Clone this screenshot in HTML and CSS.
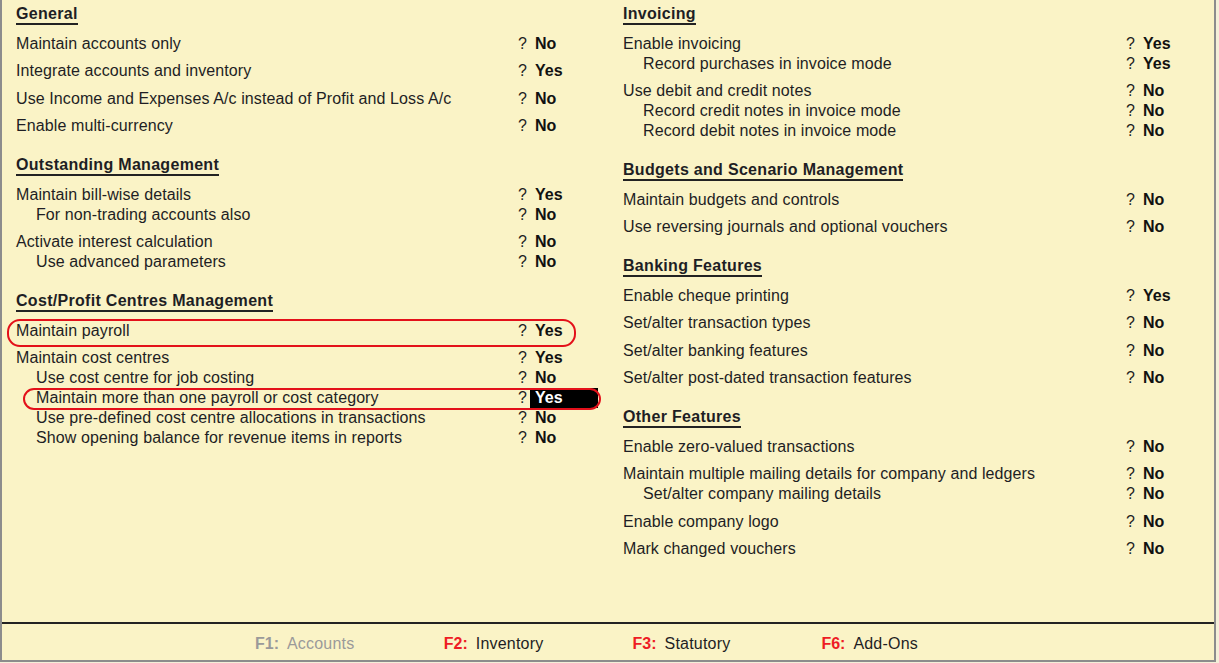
FILE: index.html
```html
<!DOCTYPE html>
<html>
<head>
<meta charset="utf-8">
<title>Features</title>
<link rel="stylesheet" href="styles.css">
</head>
<body>
<div class="window">
  <div class="main">
    <div class="col">
      <div class="section">
        <div class="sec-title"><span>General</span></div>
        <div class="group"><div class="row"><span class="lbl">Maintain accounts only</span><span class="ans"><span class="q">?</span><span class="v">No</span></span></div></div>
        <div class="group"><div class="row"><span class="lbl">Integrate accounts and inventory</span><span class="ans"><span class="q">?</span><span class="v">Yes</span></span></div></div>
        <div class="group"><div class="row"><span class="lbl">Use Income and Expenses A/c instead of Profit and Loss A/c</span><span class="ans"><span class="q">?</span><span class="v">No</span></span></div></div>
        <div class="group"><div class="row"><span class="lbl">Enable multi-currency</span><span class="ans"><span class="q">?</span><span class="v">No</span></span></div></div>
      </div>
      <div class="section">
        <div class="sec-title"><span>Outstanding Management</span></div>
        <div class="group">
          <div class="row"><span class="lbl">Maintain bill-wise details</span><span class="ans"><span class="q">?</span><span class="v">Yes</span></span></div>
          <div class="row sub"><span class="lbl">For non-trading accounts also</span><span class="ans"><span class="q">?</span><span class="v">No</span></span></div>
        </div>
        <div class="group">
          <div class="row"><span class="lbl">Activate interest calculation</span><span class="ans"><span class="q">?</span><span class="v">No</span></span></div>
          <div class="row sub"><span class="lbl">Use advanced parameters</span><span class="ans"><span class="q">?</span><span class="v">No</span></span></div>
        </div>
      </div>
      <div class="section">
        <div class="sec-title"><span>Cost/Profit Centres Management</span></div>
        <div class="group"><div class="row"><span class="lbl">Maintain payroll</span><span class="ans"><span class="q">?</span><span class="v">Yes</span></span><span class="mark mark-payroll"></span></div></div>
        <div class="group">
          <div class="row"><span class="lbl">Maintain cost centres</span><span class="ans"><span class="q">?</span><span class="v">Yes</span></span></div>
          <div class="row sub"><span class="lbl">Use cost centre for job costing</span><span class="ans"><span class="q">?</span><span class="v">No</span></span></div>
          <div class="row sub"><span class="lbl">Maintain more than one payroll or cost category</span><span class="ans"><span class="q">?</span><span class="v sel">Yes</span></span><span class="mark mark-multi"></span></div>
          <div class="row sub"><span class="lbl">Use pre-defined cost centre allocations in transactions</span><span class="ans"><span class="q">?</span><span class="v">No</span></span></div>
          <div class="row sub"><span class="lbl">Show opening balance for revenue items in reports</span><span class="ans"><span class="q">?</span><span class="v">No</span></span></div>
        </div>
      </div>
    </div>
    <div class="col">
      <div class="section">
        <div class="sec-title"><span>Invoicing</span></div>
        <div class="group">
          <div class="row"><span class="lbl">Enable invoicing</span><span class="ans"><span class="q">?</span><span class="v">Yes</span></span></div>
          <div class="row sub"><span class="lbl">Record purchases in invoice mode</span><span class="ans"><span class="q">?</span><span class="v">Yes</span></span></div>
        </div>
        <div class="group">
          <div class="row"><span class="lbl">Use debit and credit notes</span><span class="ans"><span class="q">?</span><span class="v">No</span></span></div>
          <div class="row sub"><span class="lbl">Record credit notes in invoice mode</span><span class="ans"><span class="q">?</span><span class="v">No</span></span></div>
          <div class="row sub"><span class="lbl">Record debit notes in invoice mode</span><span class="ans"><span class="q">?</span><span class="v">No</span></span></div>
        </div>
      </div>
      <div class="section">
        <div class="sec-title"><span>Budgets and Scenario Management</span></div>
        <div class="group"><div class="row"><span class="lbl">Maintain budgets and controls</span><span class="ans"><span class="q">?</span><span class="v">No</span></span></div></div>
        <div class="group"><div class="row"><span class="lbl">Use reversing journals and optional vouchers</span><span class="ans"><span class="q">?</span><span class="v">No</span></span></div></div>
      </div>
      <div class="section">
        <div class="sec-title"><span>Banking Features</span></div>
        <div class="group"><div class="row"><span class="lbl">Enable cheque printing</span><span class="ans"><span class="q">?</span><span class="v">Yes</span></span></div></div>
        <div class="group"><div class="row"><span class="lbl">Set/alter transaction types</span><span class="ans"><span class="q">?</span><span class="v">No</span></span></div></div>
        <div class="group"><div class="row"><span class="lbl">Set/alter banking features</span><span class="ans"><span class="q">?</span><span class="v">No</span></span></div></div>
        <div class="group"><div class="row"><span class="lbl">Set/alter post-dated transaction features</span><span class="ans"><span class="q">?</span><span class="v">No</span></span></div></div>
      </div>
      <div class="section">
        <div class="sec-title"><span>Other Features</span></div>
        <div class="group"><div class="row"><span class="lbl">Enable zero-valued transactions</span><span class="ans"><span class="q">?</span><span class="v">No</span></span></div></div>
        <div class="group">
          <div class="row"><span class="lbl">Maintain multiple mailing details for company and ledgers</span><span class="ans"><span class="q">?</span><span class="v">No</span></span></div>
          <div class="row sub"><span class="lbl">Set/alter company mailing details</span><span class="ans"><span class="q">?</span><span class="v">No</span></span></div>
        </div>
        <div class="group"><div class="row"><span class="lbl">Enable company logo</span><span class="ans"><span class="q">?</span><span class="v">No</span></span></div></div>
        <div class="group"><div class="row"><span class="lbl">Mark changed vouchers</span><span class="ans"><span class="q">?</span><span class="v">No</span></span></div></div>
      </div>
    </div>
  </div>
  <div class="footer">
    <div class="fitem disabled"><span class="key">F1:</span><span class="flbl">Accounts</span></div>
    <div class="fitem"><span class="key">F2:</span><span class="flbl">Inventory</span></div>
    <div class="fitem"><span class="key">F3:</span><span class="flbl">Statutory</span></div>
    <div class="fitem"><span class="key">F6:</span><span class="flbl">Add-Ons</span></div>
  </div>
</div>
</body>
</html>
```

FILE: styles.css
```css
html, body {
  margin: 0;
  padding: 0;
}
body {
  background: #f4efd8;
  font-family: "Liberation Sans", Arial, sans-serif;
  font-size: 16px;
  color: #1e1e24;
}
.window {
  box-sizing: border-box;
  width: 1216px;
  height: 662px;
  border-style: solid;
  border-color: #8c8c8c;
  border-width: 0 2px 2px 2px;
  background: #faf3c6;
  display: flex;
  flex-direction: column;
}
.main {
  flex: 1;
  display: grid;
  grid-template-columns: 584px 585px;
  column-gap: 23px;
  padding: 5px 0 0 14px;
}
.section + .section {
  margin-top: 20px;
}
.sec-title {
  height: 20px;
  margin-bottom: 8.5px;
}
.sec-title span {
  display: inline-block;
  font-weight: bold;
  letter-spacing: 0.3px;
  line-height: 18px;
  border-bottom: 2px solid #222;
}
.group + .group {
  margin-top: 7.5px;
}
.row {
  position: relative;
  display: flex;
  line-height: 20px;
  height: 20px;
  white-space: nowrap;
}
.row.sub {
  padding-left: 20px;
}
.lbl {
  flex: 1;
  letter-spacing: 0.1px;
}
.ans {
  width: 82px;
  display: flex;
}
.q {
  width: 12px;
}
.v {
  box-sizing: border-box;
  width: 68px;
  padding-left: 5px;
  font-weight: bold;
  color: #111;
}
.v.sel {
  background: #000;
  color: #fff;
}
.mark {
  position: absolute;
  border: 2px solid #e3101a;
  pointer-events: none;
}
.mark-payroll {
  left: -9px;
  right: 24px;
  top: -2px;
  bottom: -6px;
  border-radius: 13px;
}
.mark-multi {
  left: 7px;
  right: -1px;
  top: 0;
  bottom: -1.5px;
  border-radius: 11px;
}
.footer {
  height: 38px;
  border-top: 2px solid #222;
  display: flex;
  align-items: center;
  padding-left: 253px;
  padding-top: 3px;
  box-sizing: border-box;
}
.fitem {
  width: 188.8px;
  display: flex;
}
.key {
  font-weight: bold;
  color: #ee1c24;
  margin-right: 8px;
}
.flbl {
  color: #1e1e24;
  letter-spacing: 0.2px;
}
.fitem.disabled .key,
.fitem.disabled .flbl {
  color: #9a9a9a;
}
```
